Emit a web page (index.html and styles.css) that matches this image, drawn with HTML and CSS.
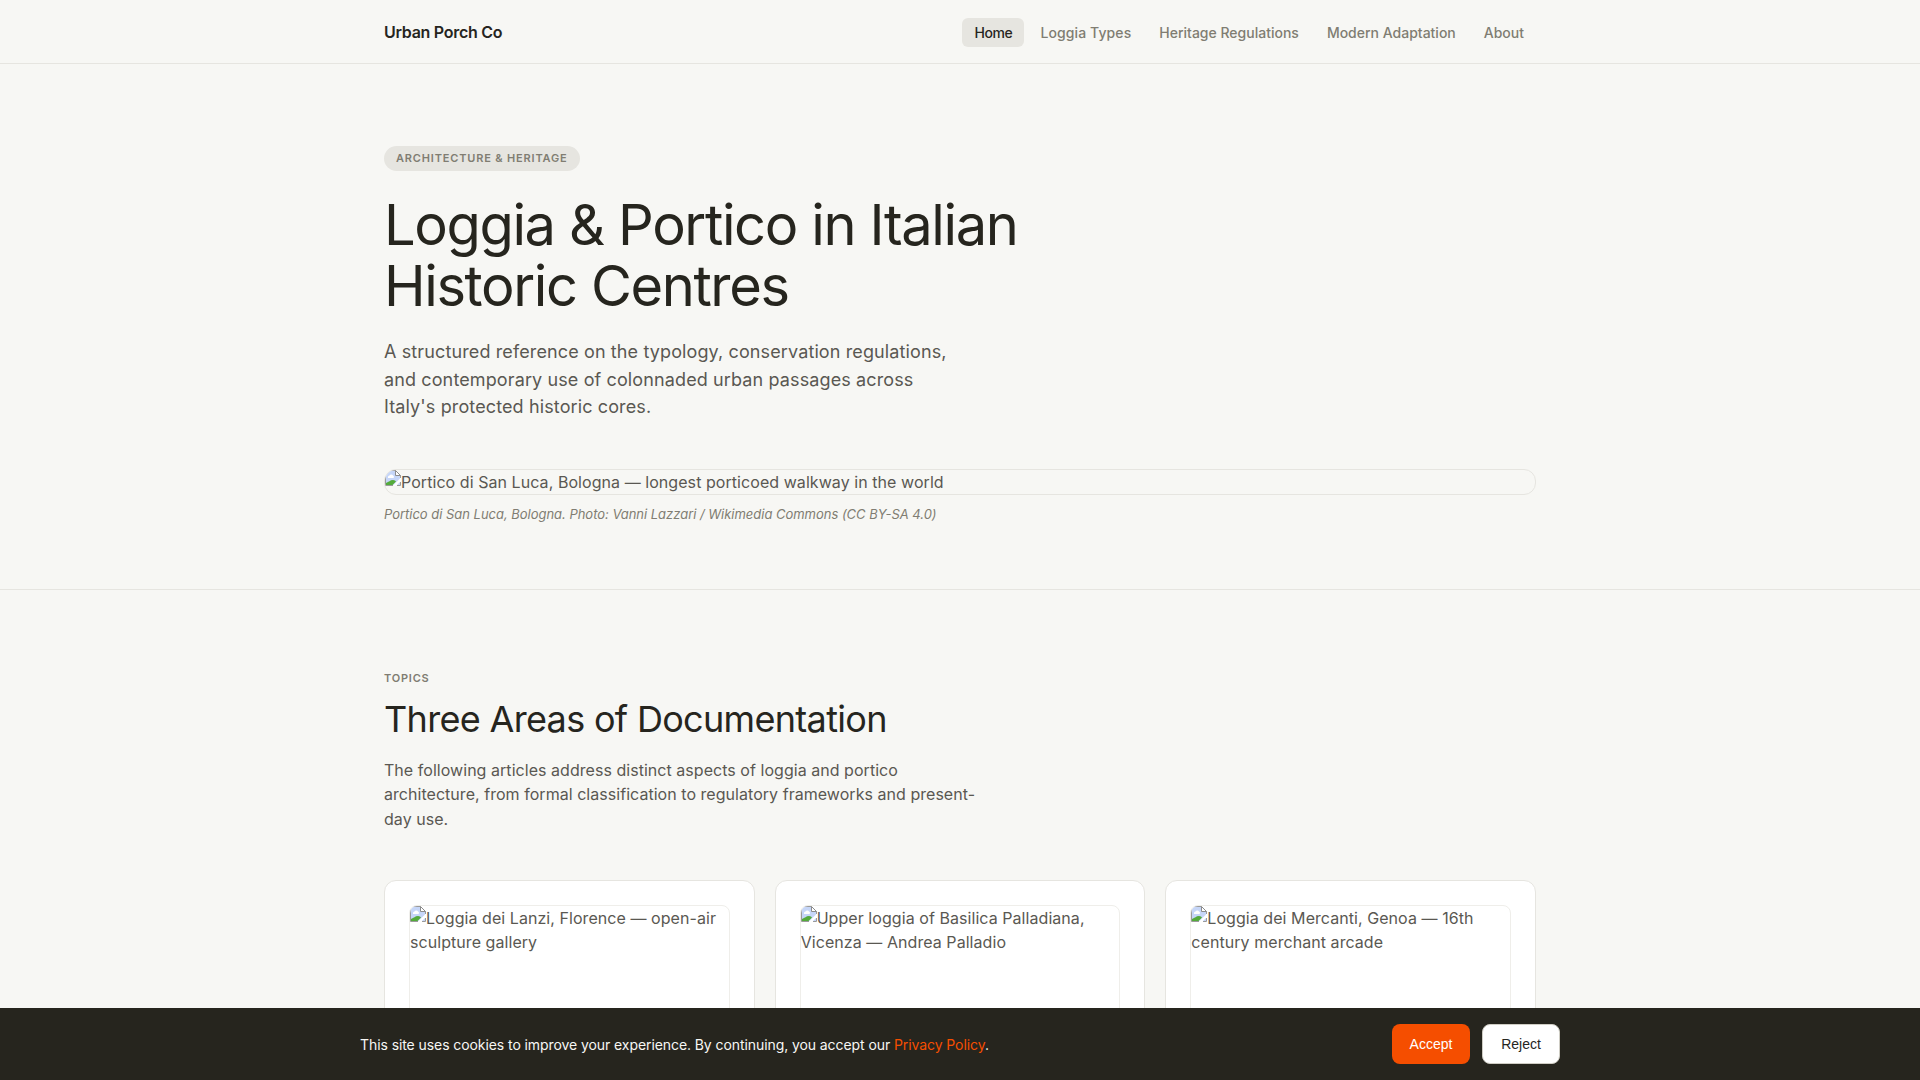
FILE: index.html
```html
<!DOCTYPE html>
<html lang="en">
<head>
    <meta charset="UTF-8">
    <meta name="viewport" content="width=device-width, initial-scale=1.0">
    <title>Urban Porch Co</title>
    <link rel="stylesheet" href="styles.css">
</head>
<body>
    <!-- shared icon for photos that are not available -->
    <svg class="sprite" width="0" height="0">
        <symbol id="photo" viewBox="0 0 16 16">
            <path d="M1 1h9.500L15 5.500V15H1z" fill="#c6d6f8"/>
            <path d="M3 7a1.500 1.500 0 0 1 1.500-1.500A2 2 0 0 1 8 5.500 1.500 1.500 0 0 1 8.500 8H3z" fill="#fff"/>
            <path d="M1 15v-2c3-1 4-3 7-3 1.500 0 2.500 1 3 1.500L7.500 15z" fill="#54ab3b"/>
            <path d="M16 7.500L8 15.500h3.500L16 11z" fill="#fff"/>
            <path d="M.5 15.500V.5h10l5 5V8M.5 15.500H8M12 15.500h3.500V12" fill="none" stroke="#9a9a9a"/>
            <path d="M10.500.5v5h5z" fill="#fff" stroke="#8c8c8c"/>
        </symbol>
    </svg>

    <header class="header">
        <div class="container header-inner">
            <a class="logo" href="#">Urban Porch Co</a>
            <nav class="nav">
                <a class="active" href="#">Home</a>
                <a class="types" href="#">Loggia Types</a>
                <a href="#">Heritage Regulations</a>
                <a href="#">Modern Adaptation</a>
                <a href="#">About</a>
            </nav>
        </div>
    </header>

    <section class="hero">
        <div class="container">
            <span class="tag">Architecture &amp; Heritage</span>
            <h1>Loggia &amp; Portico in Italian Historic Centres</h1>
            <p class="lead">A structured reference on the typology, conservation regulations, and contemporary use of colonnaded urban passages across Italy's protected historic cores.</p>
            <figure>
                <div class="photo hero-photo"><svg class="icon"><use href="#photo"/></svg>Portico di San Luca, Bologna — longest porticoed walkway in the world</div>
                <figcaption>Portico di San Luca, Bologna. Photo: Vanni Lazzari / Wikimedia Commons (CC BY-SA 4.0)</figcaption>
            </figure>
        </div>
    </section>

    <section class="topics">
        <div class="container">
            <div class="label">Topics</div>
            <h2>Three Areas of Documentation</h2>
            <p class="intro">The following articles address distinct aspects of loggia and portico architecture, from formal classification to regulatory frameworks and present-day use.</p>
            <div class="cards">
                <article class="card">
                    <div class="photo card-photo"><svg class="icon"><use href="#photo"/></svg>Loggia dei Lanzi, Florence — open-air sculpture gallery</div>
                </article>
                <article class="card">
                    <div class="photo card-photo"><svg class="icon"><use href="#photo"/></svg>Upper loggia of Basilica Palladiana, Vicenza — Andrea Palladio</div>
                </article>
                <article class="card">
                    <div class="photo card-photo"><svg class="icon"><use href="#photo"/></svg>Loggia dei Mercanti, Genoa — 16th century merchant arcade</div>
                </article>
            </div>
        </div>
    </section>

    <div class="cookie">
        <div class="cookie-inner">
            <p>This site uses cookies to improve your experience. By continuing, you accept our <a href="#">Privacy Policy</a>.</p>
            <div class="cookie-buttons">
                <button class="accept">Accept</button>
                <button class="reject">Reject</button>
            </div>
        </div>
    </div>
</body>
</html>
```
FILE: styles.css
```css
*{
    padding: 0;
    margin: 0;
    box-sizing: border-box;
}
body{
    background-color: #f7f7f4;
    color: #26251e;
    font-family: Inter, "Liberation Sans", sans-serif;
    font-size: 16px;
    line-height: 1.52;
    height: 1080px;
    overflow: hidden;
}
a{
    text-decoration: none;
    color: inherit;
}
.sprite{
    display: none;
}
.container{
    max-width: 1200px;
    margin: 0 auto;
    padding: 0 24px;
}

.header{
    height: 64px;
    border-bottom: 1px solid #e6e5e0;
}
.header-inner{
    height: 64px;
    display: flex;
    align-items: center;
    justify-content: space-between;
}
.logo{
    font-weight: 600;
    letter-spacing: -0.28px;
}
.nav{
    display: flex;
    gap: 4px;
}
.nav a{
    font-size: 14px;
    font-weight: 500;
    line-height: 1.5;
    color: #807d72;
    padding: 4px 12px;
    border-radius: 6px;
}
.nav a.active{
    background-color: #e6e5e0;
    color: #26251e;
    letter-spacing: -0.4px;
}
.nav .types{
    letter-spacing: 0.1px;
}

.hero{
    padding: 80px 0 64px;
    border-bottom: 1px solid #e6e5e0;
}
.tag{
    display: inline-block;
    background-color: #e6e5e0;
    color: #807d72;
    font-size: 11px;
    font-weight: 600;
    letter-spacing: 0.83px;
    text-transform: uppercase;
    padding: 4px 12px;
    border-radius: 999px;
    margin-bottom: 24px;
}
h1{
    font-size: 56px;
    font-weight: 400;
    line-height: 1.1;
    letter-spacing: -1.38px;
    max-width: 720px;
    margin-bottom: 20.4px;
}
.lead{
    font-size: 18px;
    color: #5a5852;
    max-width: 580px;
    letter-spacing: 0.12px;
    margin-bottom: 48.6px;
}
.photo{
    border: 1px solid #e6e5e0;
    color: #5a5852;
    letter-spacing: 0.06px;
    overflow: hidden;
}
.icon{
    width: 16px;
    height: 16px;
    vertical-align: top;
}
.hero-photo{
    border-radius: 12px;
}
figcaption{
    font-size: 13px;
    font-style: italic;
    letter-spacing: -0.02px;
    color: #807d72;
    margin-top: 10px;
}

.topics{
    padding: 80px 0;
}
.label{
    font-size: 11px;
    font-weight: 600;
    letter-spacing: 0.8px;
    text-transform: uppercase;
    color: #807d72;
    margin-bottom: 11px;
}
h2{
    font-size: 36px;
    font-weight: 400;
    line-height: 1.2;
    letter-spacing: -0.68px;
    margin-bottom: 17px;
}
.intro{
    color: #5a5852;
    max-width: 600px;
    letter-spacing: 0.04px;
    margin-bottom: 49px;
}
.cards{
    display: grid;
    grid-template-columns: repeat(3, 1fr);
    gap: 20px;
}
.card{
    background-color: #fff;
    border: 1px solid #e6e5e0;
    border-radius: 12px;
    padding: 24px;
}
.card-photo{
    height: 140px;
    border-color: #efeeea;
    border-radius: 8px;
}

.cookie{
    position: fixed;
    left: 0;
    right: 0;
    bottom: 0;
    background-color: #26251e;
    color: #f7f7f4;
    padding: 16px 24px;
}
.cookie-inner{
    max-width: 1200px;
    margin: 0 auto;
    display: flex;
    align-items: center;
    justify-content: space-between;
    font-size: 14px;
    line-height: 1.5;
    letter-spacing: -0.08px;
}
.cookie a{
    color: #f54e00;
}
.cookie-buttons{
    display: flex;
    gap: 12px;
}
.cookie button{
    width: 78px;
    height: 40px;
    border: none;
    border-radius: 8px;
    font-family: "Liberation Sans", Arial, sans-serif;
    font-size: 14px;
}
.cookie .accept{
    background-color: #f54e00;
    color: #fff;
}
.cookie .reject{
    background-color: #fff;
    color: #26251e;
    border: 1px solid #cfcdc4;
}
```
